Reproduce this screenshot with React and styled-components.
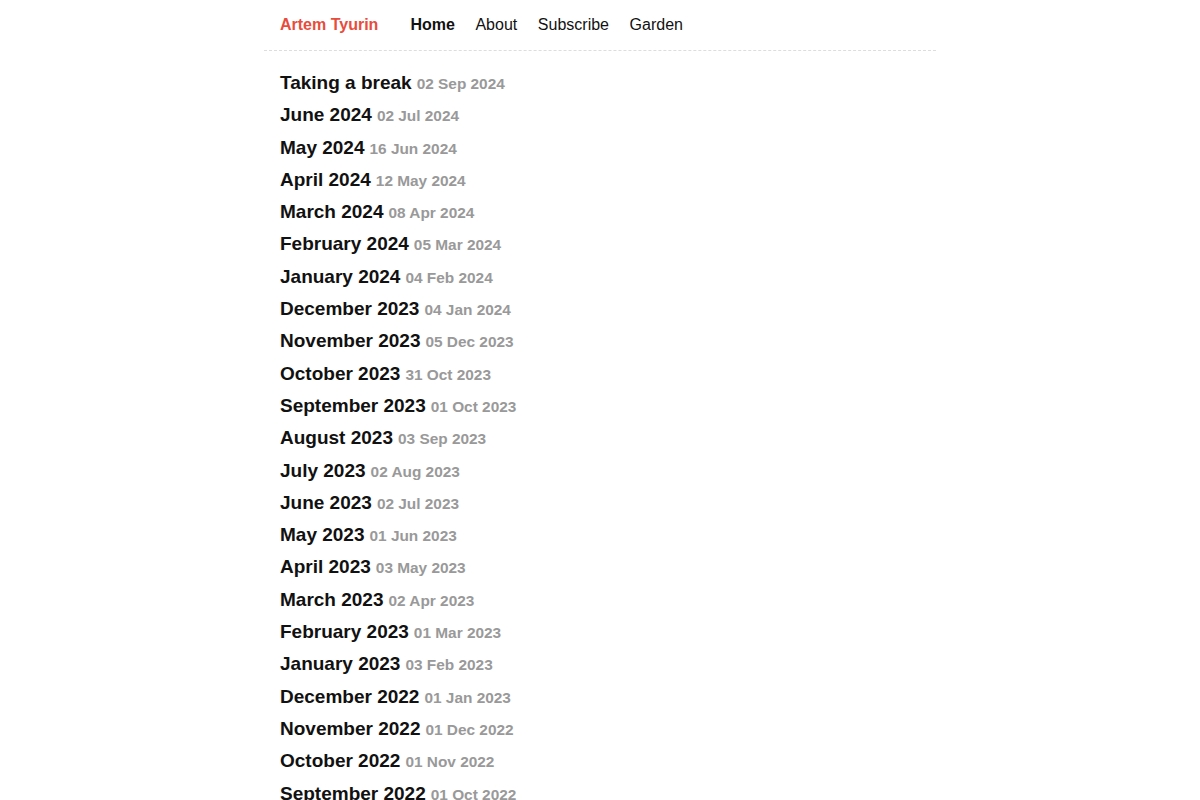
import React from 'react';
import styled, { createGlobalStyle } from 'styled-components';

const GlobalStyle = createGlobalStyle`
  body {
    margin: 0;
    background: #fff;
    font-family: "Liberation Sans", Arial, sans-serif;
    color: #111;
  }
`;

const Page = styled.div`
  width: 672px;
  margin: 0 auto;
`;

const Header = styled.header`
  display: flex;
  align-items: center;
  height: 49px;
  padding: 0 16px 1px;
  border-bottom: 1px dashed #ddd;
  font-size: 16px;
`;

const Brand = styled.a`
  color: #e74c3c;
  font-weight: bold;
  text-decoration: none;
  margin-right: 32px;
`;

const Nav = styled.nav`
  display: flex;
  gap: 20.6px;
`;

const NavLink = styled.a`
  color: #111;
  text-decoration: none;
  font-weight: ${(p) => (p.$active ? 'bold' : 'normal')};
`;

const PostList = styled.ul`
  list-style: none;
  margin: 0;
  padding: 16px 16px 0;
`;

const Post = styled.li`
  line-height: 32.3px;
  height: 32.3px;
  white-space: nowrap;
`;

const Title = styled.a`
  font-size: 19px;
  font-weight: bold;
  color: #111;
  text-decoration: none;
`;

const PostDate = styled.span`
  font-size: 15.4px;
  font-weight: bold;
  color: #999;
  margin-left: 5px;
`;

const posts = [
  ['Taking a break', '02 Sep 2024'],
  ['June 2024', '02 Jul 2024'],
  ['May 2024', '16 Jun 2024'],
  ['April 2024', '12 May 2024'],
  ['March 2024', '08 Apr 2024'],
  ['February 2024', '05 Mar 2024'],
  ['January 2024', '04 Feb 2024'],
  ['December 2023', '04 Jan 2024'],
  ['November 2023', '05 Dec 2023'],
  ['October 2023', '31 Oct 2023'],
  ['September 2023', '01 Oct 2023'],
  ['August 2023', '03 Sep 2023'],
  ['July 2023', '02 Aug 2023'],
  ['June 2023', '02 Jul 2023'],
  ['May 2023', '01 Jun 2023'],
  ['April 2023', '03 May 2023'],
  ['March 2023', '02 Apr 2023'],
  ['February 2023', '01 Mar 2023'],
  ['January 2023', '03 Feb 2023'],
  ['December 2022', '01 Jan 2023'],
  ['November 2022', '01 Dec 2022'],
  ['October 2022', '01 Nov 2022'],
  ['September 2022', '01 Oct 2022'],
];

export default function App() {
  return (
    <>
      <GlobalStyle />
      <Page>
        <Header>
          <Brand href="#">Artem Tyurin</Brand>
          <Nav>
            <NavLink href="#" $active>Home</NavLink>
            <NavLink href="#">About</NavLink>
            <NavLink href="#">Subscribe</NavLink>
            <NavLink href="#">Garden</NavLink>
          </Nav>
        </Header>
        <PostList>
          {posts.map(([title, date]) => (
            <Post key={title}>
              <Title href="#">{title}</Title>
              <PostDate>{date}</PostDate>
            </Post>
          ))}
        </PostList>
      </Page>
    </>
  );
}
